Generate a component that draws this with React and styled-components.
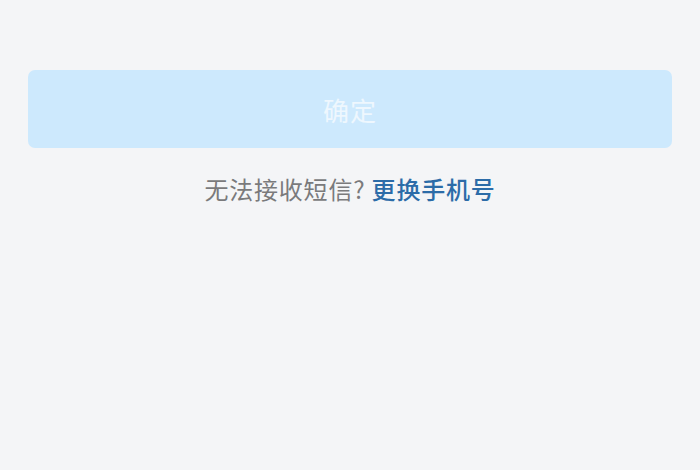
import React from "react";
import styled, { createGlobalStyle } from "styled-components";

const GlobalStyle = createGlobalStyle`
  html, body {
    margin: 0;
    padding: 0;
    background-color: #f4f5f7;
  }
  body {
    font-family: "Noto Sans CJK SC", "Noto Sans", sans-serif;
  }
`;

const Page = styled.div`
  width: 700px;
  height: 470px;
  box-sizing: border-box;
  padding: 70px 28px 0;
  display: flex;
  flex-direction: column;
  align-items: center;
  gap: 24px;
`;

const ConfirmButton = styled.button`
  width: 100%;
  height: 78px;
  border: none;
  border-radius: 7px;
  background-color: #cde9fd;
  color: #eef7fe;
  font-family: inherit;
  font-size: 26px;
  letter-spacing: 1px;
  cursor: default;
`;

const Hint = styled.p`
  margin: 0;
  font-size: 24px;
  line-height: 34px;
  letter-spacing: 0.8px;
  color: #7a7a7c;
`;

const ChangeLink = styled.a`
  color: #2c6ca8;
  font-weight: 500;
  text-decoration: none;
`;

export default function App() {
  return (
    <>
      <GlobalStyle />
      <Page>
        <ConfirmButton disabled>确定</ConfirmButton>
        <Hint>
          无法接收短信?{" "}
          <ChangeLink href="#">更换手机号</ChangeLink>
        </Hint>
      </Page>
    </>
  );
}
